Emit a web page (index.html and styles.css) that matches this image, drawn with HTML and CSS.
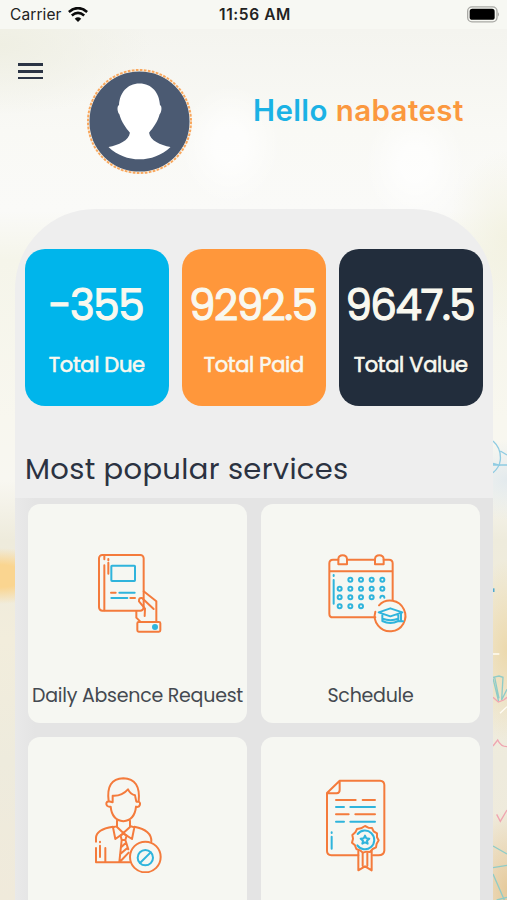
FILE: index.html
```html
<!DOCTYPE html>
<html lang="en">

<head>
  <meta charset="UTF-8" />
  <meta name="viewport" content="width=device-width, initial-scale=1.0"/>
  <title>Home</title>
  <link rel="stylesheet" href="styles.css">
</head>
<body>
  <div class="screen">
    <svg class="doodles" viewBox="0 0 111 1500" fill="none" stroke-width="4">
      <g stroke="#8fcbe2">
        <path d="M69 123Q94 145 91 180Q88 203 69 218M91 153L111 165M69 195H111M69 190L91 196"/>
        <path d="M71 565V576" stroke="#4fa9cf" stroke-width="5"/>
      </g>
      <g stroke="#8fccc8">
        <path d="M69 832L87 828L99 832L95 900L111 868M69 835L86 905M74 832L87 895"/>
        <path d="M69 1338L111 1362M69 1403L111 1396M69 1422L103 1500M80 1500L111 1492"/>
      </g>
      <g stroke="#f0a5b1">
        <path d="M69 892L85 906L101 900L111 892"/>
        <path d="M69 1038L83 1020Q92 1040 111 1040M80 1243L91 1264L111 1230"/>
      </g>
      <path d="M69 762H88M90 940L111 920" stroke="#fffdf4"/>
    </svg>

    <div class="statusbar">
      <div class="carrier">
        <span>Carrier</span>
        <svg class="wifi" viewBox="0 0 60 46" fill="none" stroke="#0b0b0b">
          <path d="M2 15Q30 -8 58 15" stroke-width="8"/>
          <path d="M11 26Q30 10 49 26" stroke-width="8"/>
          <path d="M20 36L30 46L40 36Q30 27 20 36Z" fill="#0b0b0b" stroke="none"/>
        </svg>
      </div>
      <div class="time">11:56 AM</div>
      <div class="power">
        <svg class="battery" viewBox="0 0 99 50">
          <rect x="2" y="2" width="88" height="45" rx="13" fill="none" stroke="#a9a9a5" stroke-width="4"/>
          <rect x="8" y="8" width="75" height="33" rx="8" fill="#000"/>
          <path d="M93 18Q99 24 93 31Z" fill="#a9a9a5"/>
        </svg>
      </div>
    </div>

    <div class="header">
      <div class="menu">
        <span></span>
        <span></span>
        <span></span>
      </div>
      <svg class="avatar" viewBox="0 0 324 324">
        <circle cx="162" cy="162" r="155" fill="#4b5a72" stroke="#f7f1e6" stroke-width="7"/>
        <circle cx="162" cy="162" r="156" fill="none" stroke="#f9a75d" stroke-width="6" stroke-dasharray="8 4.25"/>
        <path d="M162 47C200 47 222 76 224 112C232 116 228 136 223 140C217 164 203 181 191 196C194 219 225 234 256 239C203 289 121 289 68 239C99 234 130 219 133 196C121 181 107 164 101 140C96 136 92 116 100 112C102 76 124 47 162 47Z" fill="#fff"/>
      </svg>
      <div class="greeting"><span class="hello">Hello</span> <span class="name">nabatest</span></div>
    </div>

    <div class="panel">
      <div class="stats">
        <div class="stat blue">
          <div class="value">-355</div>
          <div class="caption">Total Due</div>
        </div>
        <div class="stat orange">
          <div class="value">9292.5</div>
          <div class="caption">Total Paid</div>
        </div>
        <div class="stat dark">
          <div class="value">9647.5</div>
          <div class="caption">Total Value</div>
        </div>
      </div>

      <h2>Most popular services</h2>

      <div class="services">
        <div class="card">
          <svg class="icon" viewBox="0 0 300 300">
            <rect x="42" y="45" width="134" height="167" rx="10"/>
            <path d="M58 47V58M58 76V211M70 57V61M70 68V101"/>
            <path d="M176 154L214 184V245M206 207L171 174Q161 172 162 184L180 206L179 228M154 213V233L166 245"/>
            <rect x="157" y="246" width="69" height="29" rx="4"/>
            <path d="M78 158H92M136 174H150"/>
            <g class="accent">
              <rect x="79" y="77" width="71" height="46" rx="2"/>
              <path d="M103 158H149M79 174H127"/>
              <circle cx="210" cy="261" r="6" class="fill"/>
            </g>
          </svg>
          <div class="label">Daily Absence Request</div>
        </div>

        <div class="card">
          <svg class="icon" viewBox="9 -15 300 300">
            <path d="M70 44H54Q43 44 43 55V206Q43 217 54 217H181M96 44H179M206 44H222Q233 44 233 55V165M43 79H233"/>
            <path d="M70 58V42Q71 31 83 31Q95 31 96 42V58ZM180 58V42Q181 31 193 31Q205 31 206 42V58Z"/>
            <path d="M192 181A46 46 0 1 1 181 200"/>
            <g class="accent">
              <path d="M56 90V93M56 105V176"/>
              <g class="dots">
                <circle cx="106" cy="104" r="6"/><circle cx="138" cy="104" r="6"/><circle cx="170" cy="104" r="6"/><circle cx="202" cy="104" r="6"/>
                <circle cx="74" cy="131" r="6"/><circle cx="106" cy="131" r="6"/><circle cx="138" cy="131" r="6"/><circle cx="170" cy="131" r="6"/><circle cx="202" cy="131" r="6"/>
                <circle cx="74" cy="157" r="6"/><circle cx="106" cy="157" r="6"/><circle cx="138" cy="157" r="6"/><circle cx="170" cy="157" r="6"/><path d="M196 158A6 6 0 1 1 208 158"/>
                <circle cx="74" cy="184" r="6"/><circle cx="106" cy="184" r="6"/><circle cx="138" cy="184" r="6"/>
              </g>
              <path d="M191 202L226 190L262 202L226 214ZM202 209V228Q226 240 250 228V209M203 221Q226 230 250 221M258 205V229M253 229H264"/>
            </g>
          </svg>
          <div class="label">Schedule</div>
        </div>

        <div class="card">
          <svg class="icon" viewBox="0 9 300 300">
            <path d="M71 94Q62 26 115 25Q168 26 161 94M83 95V77Q110 79 129 58Q136 72 150 76L154 95H161Q169 99 162 109Q157 112 153 110Q149 151 115 154Q81 151 77 110Q71 112 66 107Q60 97 71 94L83 97"/>
            <path d="M96 152V171L115 189L135 171V152M96 168L84 172L91 207L115 190L141 207L148 172L135 168"/>
            <path d="M84 170Q33 178 33 204V215M148 170Q200 180 199 214M33 234V277H134M45 215V217M45 227V261M61 234V276"/>
            <path d="M107 197L115 190L125 197L121 210H110ZM110 210L103 276M121 210L130 238M109 231L123 218M105 253L127 234M107 273L131 248"/>
            <circle cx="181" cy="261" r="46"/>
            <g class="accent">
              <circle cx="181" cy="263" r="23"/>
              <path d="M165 279L197 247"/>
            </g>
          </svg>
        </div>

        <div class="card">
          <svg class="icon" viewBox="9 9 300 300">
            <path d="M130 256H49Q36 255 36 243V69L74 32H195Q208 33 208 45V242Q207 256 190 256H174M36 70H65Q74 69 74 60V32"/>
            <path d="M63 90H122M143 90H180M63 133H101M121 133H180"/>
            <path d="M150 168L160 173L171 174L176 184L186 190L186 202L191 211L185 221L183 232L173 237L165 246L154 245L144 248L135 241L124 237L120 226L111 218L114 206L112 195L121 187L126 177L138 175Z"/>
            <path d="M130 243V301L150 289L170 301V243M143 250V287M157 250V287"/>
            <g class="accent">
              <path d="M63 111H87M106 111H180M63 155H87M106 155H180M50 187V189M50 200V236"/>
              <path d="M128 192A28 28 0 1 1 127 226"/>
              <path d="M150 197L154 205L163 206L156 212L158 221L150 217L142 221L144 212L137 206L146 205Z"/>
            </g>
          </svg>
        </div>
      </div>
    </div>
  </div>
</body>

</html>
```

FILE: styles.css
```css
body {
  margin: 0;
  font-family: 'Poppins', 'Inter', sans-serif;
}
.screen {
  position: relative;
  height: 900px;
  overflow: hidden;
  background:
    radial-gradient(ellipse 50px 60px at 230px 145px, rgba(255, 255, 255, 0.7) 30%, transparent 100%),
    radial-gradient(ellipse 50px 60px at 415px 165px, rgba(255, 255, 255, 0.7) 30%, transparent 100%),
    radial-gradient(ellipse 150px 70px at 0 45px, #efefe3, transparent),
    radial-gradient(ellipse 60px 28px at 0 576px, #fad590 40%, transparent 100%),
    radial-gradient(ellipse 60px 90px at 507px 240px, #f3f2e2, transparent),
    radial-gradient(ellipse 50px 40px at 507px 480px, #e3eaed, transparent),
    radial-gradient(ellipse 40px 90px at 507px 650px, #ecd9ad, transparent),
    radial-gradient(ellipse 40px 80px at 507px 890px, #e6ca9b, transparent),
    linear-gradient(#f4f4ef 30px, #f9f9f5 130px, #fafaf8 210px, #f5f5ea 260px, #f8f7ef 420px, #f8f7f1 480px, #eeebdc 540px, #f2eddc 640px, #eeebdd 760px, #f0eadb 900px);
}
.doodles {
  position: absolute;
  right: 0;
  bottom: 0;
  width: 37px;
  height: 500px;
}
.statusbar {
  display: grid;
  grid-template-columns: 1fr auto 1fr;
  align-items: center;
  height: 29px;
  padding: 0 7px 0 10px;
  background: #f7f8f3;
  color: #222;
}
.carrier {
  display: flex;
  align-items: center;
  gap: 6px;
  font-family: 'Inter', sans-serif;
  font-size: 15.5px;
  letter-spacing: 0.1px;
}
.wifi {
  width: 20px;
  height: 15px;
}
.time {
  font-family: 'Inter', sans-serif;
  font-size: 15.5px;
  font-weight: 600;
  letter-spacing: 0.6px;
}
.power {
  display: flex;
  justify-content: flex-end;
}
.battery {
  width: 33px;
  height: 17px;
}
.header {
  display: flex;
  align-items: flex-start;
  height: 180px;
  padding-left: 18px;
}
.menu {
  display: flex;
  flex-direction: column;
  gap: 4px;
  width: 25px;
  margin-top: 34px;
}
.menu span {
  height: 2.8px;
  background: #2b3445;
}
.avatar {
  width: 107px;
  height: 107px;
  margin: 39px 0 0 42.5px;
}
.greeting {
  margin: 63px 0 0 60.5px;
  font-family: 'Inter', sans-serif;
  font-size: 29.5px;
  font-weight: 600;
  line-height: 36px;
  letter-spacing: 0.4px;
  white-space: nowrap;
}
.hello {
  color: #1bb2e5;
}
.name {
  color: #fb983f;
}
.panel {
  position: relative;
  height: 760px;
  margin: 0 14px 0 15px;
  border-radius: 80px 80px 0 0;
  background: #eeeeee;
}
.stats {
  display: grid;
  grid-template-columns: repeat(3, 1fr);
  gap: 13.5px;
  padding: 40px 10.5px 0 10px;
}
.stat {
  height: 156.5px;
  border-radius: 20px;
  color: #f9f8ef;
  text-align: center;
  white-space: nowrap;
}
.blue {
  background: #00b5eb;
}
.orange {
  background: #ff973b;
}
.dark {
  background: #222d3c;
}
.value {
  padding: 32px 2px 0 0;
  font-size: 42px;
  font-weight: 400;
  line-height: 50px;
  letter-spacing: -1.5px;
  -webkit-text-stroke: 1.1px;
}
.caption {
  margin-top: 19px;
  font-size: 21px;
  font-weight: 400;
  line-height: 30px;
  letter-spacing: -0.3px;
  -webkit-text-stroke: 0.6px;
}
h2 {
  margin: 0;
  padding: 43px 0 0 10px;
  color: #2b3241;
  font-size: 29px;
  font-weight: 400;
  line-height: 40px;
  letter-spacing: 0.33px;
}
.services {
  display: grid;
  grid-template-columns: 219px 219px;
  gap: 14px;
  margin-top: 9.5px;
  padding: 6px 13px 0;
  background: linear-gradient(90deg, #e9e9e9, #e4e4e4 20px);
}
.card {
  height: 219px;
  border-radius: 12px;
  background: #f6f7f2;
}
.icon {
  display: block;
  width: 100px;
  height: 100px;
  margin: 36px 0 0 57px;
  fill: none;
  stroke: #f47b3c;
  stroke-width: 6;
  stroke-linecap: round;
  stroke-linejoin: round;
}
.accent {
  stroke: #2fb4dc;
}
.fill {
  fill: #2fb4dc;
}
.label {
  margin-top: 42px;
  color: #444950;
  font-size: 19px;
  line-height: 28px;
  letter-spacing: -0.25px;
  text-align: center;
  white-space: nowrap;
}
```
